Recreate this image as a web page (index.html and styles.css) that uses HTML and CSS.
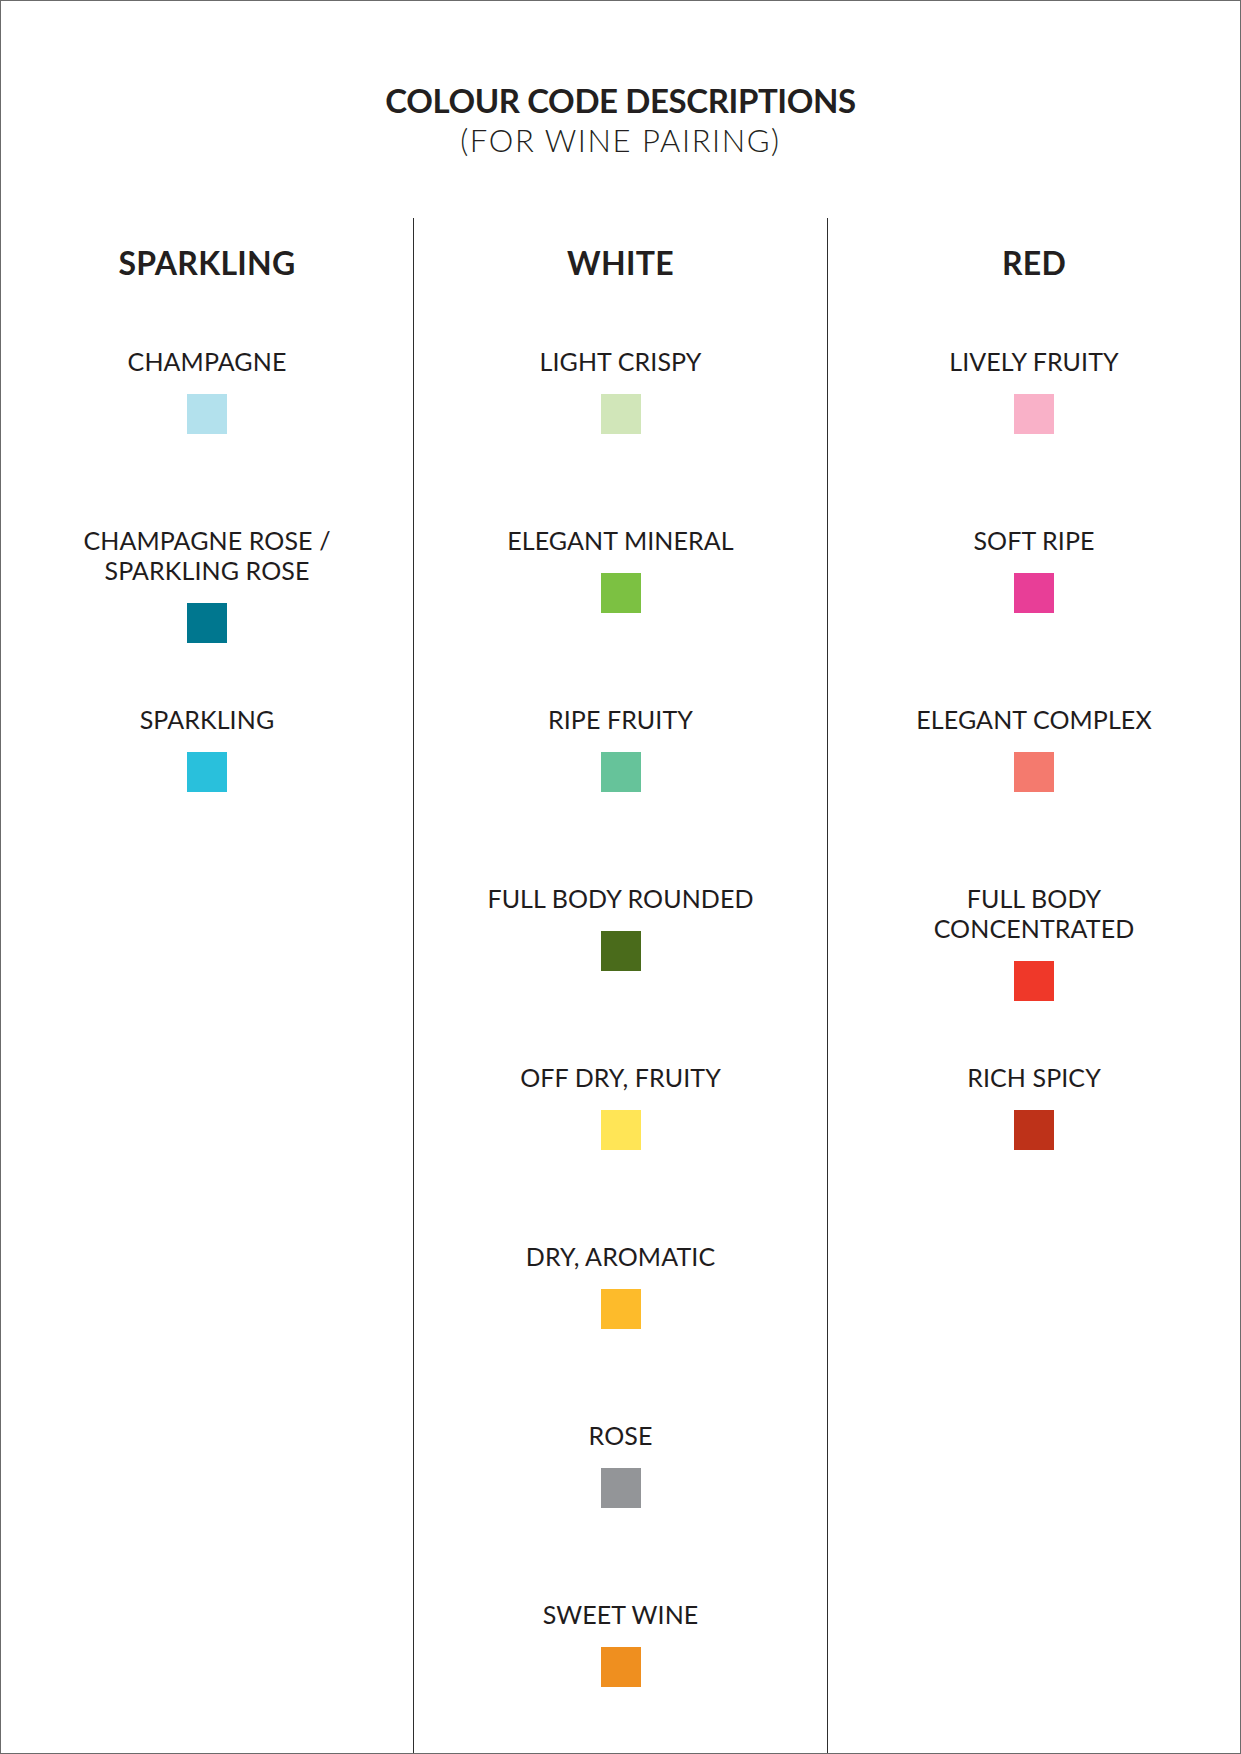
FILE: index.html
```html
<!DOCTYPE html>
<html lang="en">
<head>
<meta charset="utf-8">
<title>Colour Code Descriptions</title>
<link rel="stylesheet" href="styles.css">
</head>
<body>
<div class="page">
  <header class="head">
    <h1 class="title">COLOUR CODE DESCRIPTIONS</h1>
    <p class="subtitle">(FOR WINE PAIRING)</p>
  </header>
  <main class="cols">
    <section class="col">
      <h2 class="col-title">SPARKLING</h2>
      <ul class="items">
        <li class="item"><span class="label">CHAMPAGNE</span><span class="swatch sw-champagne"></span></li>
        <li class="item"><span class="label">CHAMPAGNE ROSE /<br>SPARKLING ROSE</span><span class="swatch sw-champagne-rose"></span></li>
        <li class="item"><span class="label">SPARKLING</span><span class="swatch sw-sparkling"></span></li>
      </ul>
    </section>
    <section class="col">
      <h2 class="col-title">WHITE</h2>
      <ul class="items">
        <li class="item"><span class="label">LIGHT CRISPY</span><span class="swatch sw-light-crispy"></span></li>
        <li class="item"><span class="label">ELEGANT MINERAL</span><span class="swatch sw-elegant-mineral"></span></li>
        <li class="item"><span class="label">RIPE FRUITY</span><span class="swatch sw-ripe-fruity"></span></li>
        <li class="item"><span class="label">FULL BODY ROUNDED</span><span class="swatch sw-full-body-rounded"></span></li>
        <li class="item"><span class="label">OFF DRY, FRUITY</span><span class="swatch sw-off-dry"></span></li>
        <li class="item"><span class="label">DRY, AROMATIC</span><span class="swatch sw-dry-aromatic"></span></li>
        <li class="item"><span class="label">ROSE</span><span class="swatch sw-rose"></span></li>
        <li class="item"><span class="label">SWEET WINE</span><span class="swatch sw-sweet"></span></li>
      </ul>
    </section>
    <section class="col">
      <h2 class="col-title">RED</h2>
      <ul class="items">
        <li class="item"><span class="label">LIVELY FRUITY</span><span class="swatch sw-lively-fruity"></span></li>
        <li class="item"><span class="label">SOFT RIPE</span><span class="swatch sw-soft-ripe"></span></li>
        <li class="item"><span class="label">ELEGANT COMPLEX</span><span class="swatch sw-elegant-complex"></span></li>
        <li class="item"><span class="label">FULL BODY<br>CONCENTRATED</span><span class="swatch sw-full-body-conc"></span></li>
        <li class="item"><span class="label">RICH SPICY</span><span class="swatch sw-rich-spicy"></span></li>
      </ul>
    </section>
  </main>
</div>
</body>
</html>
```
FILE: styles.css
```css
* { box-sizing: border-box; }

html, body {
  margin: 0;
  padding: 0;
  background: #ffffff;
}

.page {
  width: 1241px;
  height: 1754px;
  border: 1px solid #6b6b6b;
  display: flex;
  flex-direction: column;
  color: #231f20;
  font-family: "Lato", "Noto Sans", "DejaVu Sans", sans-serif;
}

.head {
  flex: 0 0 217px;
  padding-top: 79px;
  text-align: center;
}

.title {
  margin: 0;
  font-size: 33px;
  line-height: 40px;
  font-weight: 700;
  letter-spacing: -0.4px;
}

.subtitle {
  margin: 2px 0 0;
  font-size: 31px;
  line-height: 36px;
  font-weight: 300;
  letter-spacing: 1.6px;
}

.cols {
  flex: 1 1 auto;
  min-height: 0;
  display: grid;
  grid-template-columns: 412px 414px 1fr;
}

.col {
  padding-top: 26px;
  text-align: center;
}

.col + .col {
  border-left: 1px solid #2e2e2e;
}

.col-title {
  margin: 0;
  font-size: 32px;
  line-height: 38px;
  font-weight: 700;
  letter-spacing: 0.3px;
}

.items {
  list-style: none;
  margin: 64px 0 0;
  padding: 0;
}

.item {
  height: 179px;
  display: flex;
  flex-direction: column;
  align-items: center;
}

.item:last-child {
  height: auto;
}

.label {
  font-size: 25px;
  line-height: 30px;
  font-weight: 400;
  letter-spacing: 0.1px;
  color: #1f1c1d;
}

.swatch {
  width: 40px;
  height: 40px;
  margin-top: 18px;
}

.sw-champagne { background: #b3e1ed; }
.sw-champagne-rose { background: #00778f; }
.sw-sparkling { background: #29c0dc; }

.sw-light-crispy { background: #d1e6b9; }
.sw-elegant-mineral { background: #7cc142; }
.sw-ripe-fruity { background: #66c39a; }
.sw-full-body-rounded { background: #4a6b1b; }
.sw-off-dry { background: #ffe556; }
.sw-dry-aromatic { background: #fdbb2b; }
.sw-rose { background: #939598; }
.sw-sweet { background: #ef8f1f; }

.sw-lively-fruity { background: #f9b1c8; }
.sw-soft-ripe { background: #e83e97; }
.sw-elegant-complex { background: #f47a6e; }
.sw-full-body-conc { background: #ef3829; }
.sw-rich-spicy { background: #be3219; }
```
